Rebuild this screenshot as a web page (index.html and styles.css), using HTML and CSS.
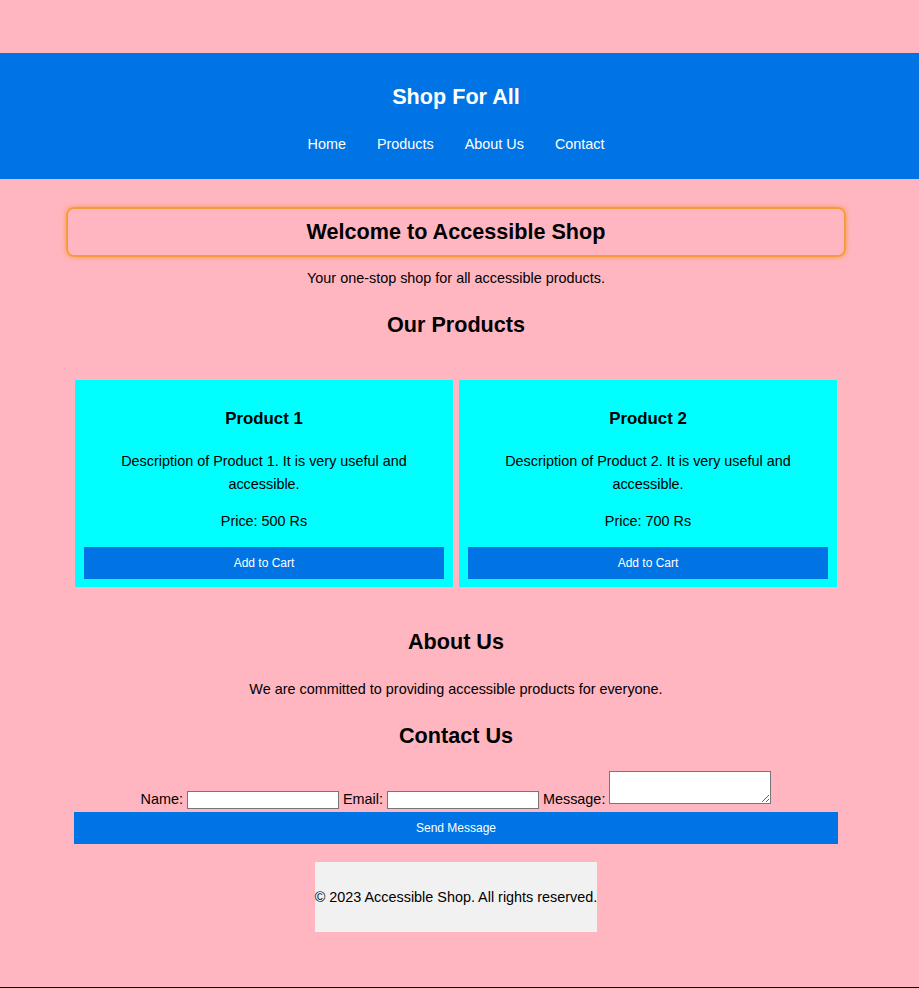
FILE: index.html
```html
<!DOCTYPE html>
<html lang="en">
<head>
<meta charset="utf-8">
<title>Shop For All</title>
<link rel="stylesheet" href="styles.css">
</head>
<body>
<header class="site-header">
  <h1 class="site-title">Shop For All</h1>
  <nav class="site-nav">
    <a href="#">Home</a>
    <a href="#">Products</a>
    <a href="#">About Us</a>
    <a href="#">Contact</a>
  </nav>
</header>
<main class="main">
  <section class="welcome">
    <h2 class="welcome-title">Welcome to Accessible Shop</h2>
  </section>
  <p class="tagline">Your one-stop shop for all accessible products.</p>
  <h2 class="section-title products-title">Our Products</h2>
  <div class="products">
    <div class="card">
      <h3 class="card-title">Product 1</h3>
      <p class="card-desc">Description of Product 1. It is very useful and accessible.</p>
      <p class="card-price">Price: 500 Rs</p>
      <button class="btn">Add to Cart</button>
    </div>
    <div class="card">
      <h3 class="card-title">Product 2</h3>
      <p class="card-desc">Description of Product 2. It is very useful and accessible.</p>
      <p class="card-price">Price: 700 Rs</p>
      <button class="btn">Add to Cart</button>
    </div>
  </div>
  <h2 class="section-title about-title">About Us</h2>
  <p class="about-text">We are committed to providing accessible products for everyone.</p>
  <h2 class="section-title contact-title">Contact Us</h2>
  <form class="contact-form">
    <div class="form-row">
      <label>Name:</label> <input class="field" type="text"> <label>Email:</label> <input class="field" type="email"> <label>Message:</label> <textarea class="area"></textarea>
    </div>
    <button class="btn send-btn" type="button">Send Message</button>
  </form>
  <div class="footer-wrap">
    <footer class="footer">© 2023 Accessible Shop. All rights reserved.</footer>
  </div>
</main>
<div class="bottom-line"></div>
</body>
</html>
```

FILE: styles.css
```css
html, body {
  margin: 0;
  padding: 0;
}
body {
  background: #ffb6c1;
  font-family: "Liberation Sans", Arial, sans-serif;
  font-size: 14.4px;
  color: #000;
  padding-right: 7px;
  padding-top: 53px;
  height: 988px;
  box-sizing: border-box;
  position: relative;
}
.site-header {
  background: #0074e4;
  color: #fff;
  text-align: center;
  margin-right: -7px;
  padding: 31px 7px 27px 0;
}
.site-title {
  font-size: 21.6px;
  line-height: 25px;
  margin: 0 0 27px;
}
.site-nav {
  display: flex;
  justify-content: center;
  gap: 31px;
  line-height: 16px;
}
.site-nav a {
  color: #fff;
  text-decoration: none;
}
.main {
  width: 764px;
  margin: 0 auto;
  text-align: center;
  padding-top: 28px;
}
.welcome {
  width: 780px;
  margin: 0 -8px;
  box-sizing: border-box;
  border: 2px solid #f89a3c;
  border-radius: 8px;
  box-shadow: 0 0 5px #f89a3c;
  padding: 9px 0 10px;
}
.welcome-title {
  margin: 0;
  font-size: 21.6px;
  line-height: 27px;
}
.tagline {
  margin: 13px 0 0;
  line-height: 16px;
}
.section-title {
  font-size: 21.6px;
  line-height: 26px;
  margin: 0;
}
.products-title {
  margin-top: 26px;
}
.products {
  display: flex;
  gap: 6px;
  margin: 42px 1px 0;
}
.card {
  flex: 1;
  background: #00ffff;
  padding: 29px 9px 8px;
}
.card-title {
  font-size: 16.85px;
  line-height: 20px;
  margin: 0 0 21px;
}
.card-desc {
  margin: 0 28px;
  line-height: 23px;
}
.card-price {
  margin: 17px 0 18px;
  line-height: 16px;
}
.btn {
  display: block;
  width: 100%;
  height: 32px;
  background: #0074e4;
  color: #fff;
  border: none;
  font-family: "Liberation Sans", Arial, sans-serif;
  font-size: 12px;
  padding: 0;
}
.about-title {
  margin-top: 42px;
}
.about-text {
  margin: 26px 0 0;
  line-height: 16px;
}
.contact-title {
  margin-top: 26px;
}
.contact-form {
  margin-top: 22px;
}
.form-row {
  line-height: 16px;
}
.field {
  width: 152px;
  height: 18px;
  box-sizing: border-box;
  border: 1px solid #767676;
  padding: 1px 2px;
  vertical-align: baseline;
}
.area {
  width: 162px;
  height: 33px;
  box-sizing: border-box;
  border: 1px solid #767676;
  vertical-align: baseline;
}
.send-btn {
  margin-top: 3px;
}
.footer-wrap {
  margin-top: 18px;
}
.footer {
  display: inline-block;
  background: #f1f1f1;
  padding: 27px 0;
  line-height: 16px;
}
.bottom-line {
  position: absolute;
  left: 0;
  right: 0;
  bottom: 0;
  height: 1px;
  background: #000;
}
```
